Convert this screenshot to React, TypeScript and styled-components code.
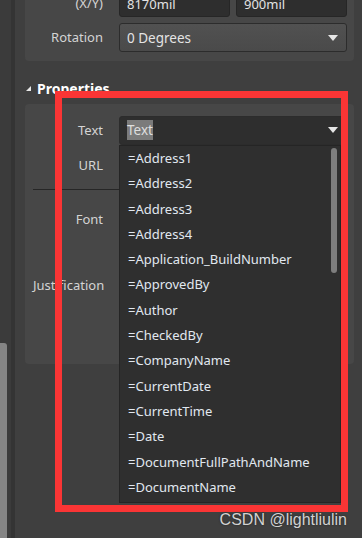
import React from "react";
import styled, { createGlobalStyle } from "styled-components";

const Global = createGlobalStyle`
  html, body {
    margin: 0;
    padding: 0;
    background: #3f3f3f;
    overflow: hidden;
  }
  body {
    font-family: "Noto Sans", "Open Sans", sans-serif;
  }
`;

const Screen = styled.div`
  position: relative;
  width: 362px;
  height: 538px;
  display: flex;
  overflow: hidden;
  background: #3f3f3f;
`;

const OuterScroll = styled.div`
  width: 11px;
  background: #3b3b3b;
  display: flex;
  flex-direction: column;
  justify-content: flex-end;
`;

const OuterThumb = styled.div`
  width: 7px;
  height: 195px;
  background: #858585;
  border-radius: 0 3px 0 0;
`;

const Divider = styled.div`
  width: 4px;
  background: #343434;
`;

const Panel = styled.div`
  flex: 1;
  padding: 0 8px 0 10px;
  display: flex;
  flex-direction: column;
`;

const Card = styled.div<{ $top?: number; $height: number }>`
  background: #474747;
  border-radius: 4px;
  margin-top: ${(p) => p.$top ?? 0}px;
  height: ${(p) => p.$height}px;
  box-sizing: border-box;
  display: flex;
  flex-direction: column;
`;

const Row = styled.div<{ $h: number; $end?: boolean }>`
  display: grid;
  grid-template-columns: 70px 228px;
  column-gap: 16px;
  padding-left: 8px;
  height: ${(p) => p.$h}px;
  align-items: ${(p) => (p.$end ? "end" : "center")};
`;

const Label = styled.div<{ $lift?: number }>`
  text-align: right;
  color: #d4d4d4;
  font-size: 13px;
  white-space: nowrap;
  margin-bottom: ${(p) => p.$lift ?? 0}px;
`;

const Input = styled.div`
  height: 26px;
  background: #2e2e2e;
  border: 1px solid #262626;
  border-radius: 3px;
  box-sizing: border-box;
  color: #e2e2e2;
  font-size: 13px;
  display: flex;
  align-items: center;
  padding-left: 7px;
`;

const Pair = styled.div`
  display: grid;
  grid-template-columns: 1fr 1fr;
  gap: 6px;
`;

const Select = styled.div<{ $dark?: boolean }>`
  height: 29px;
  box-sizing: border-box;
  border: 1px solid #2c2c2c;
  border-radius: 3px;
  background: ${(p) =>
    p.$dark ? "#2e2e2e" : "linear-gradient(#515151, #4a4a4a)"};
  color: #e4e4e4;
  font-size: 13.5px;
  display: flex;
  align-items: center;
  justify-content: space-between;
  padding: 0 8px 0 7px;
`;

const Arrow = styled.span`
  width: 0;
  height: 0;
  border-left: 5px solid transparent;
  border-right: 5px solid transparent;
  border-top: 6px solid #e6e6e6;
`;

const Selected = styled.span`
  background: #7b7b7b;
  color: #dedede;
  padding: 1px 0;
`;

const SectionHead = styled.div`
  height: 43px;
  box-sizing: border-box;
  padding: 12px 0 0 1px;
  display: flex;
  align-items: center;
  gap: 6px;
  color: #ffffff;
  font-weight: 700;
  font-size: 14px;
`;

const Tri = styled.span`
  width: 0;
  height: 0;
  border-left: 5px solid transparent;
  border-bottom: 5px solid #e8e8e8;
`;

const Rule = styled.div`
  height: 1px;
  margin: 15px 0 0 8px;
  width: 86px;
  background: #262626;
`;

const Popup = styled.div`
  position: absolute;
  left: 119px;
  top: 145px;
  width: 222px;
  height: 358px;
  background: #2f2f2f;
  border: 1px solid #252525;
  box-sizing: border-box;
  display: flex;
`;

const List = styled.div`
  flex: 1;
  display: flex;
  flex-direction: column;
`;

const Item = styled.div`
  height: 25.3px;
  line-height: 25.3px;
  padding-left: 8px;
  color: #e1e8f0;
  font-size: 13px;
  white-space: nowrap;
`;

const ListScroll = styled.div`
  width: 6px;
  padding: 2px 3px 0 0;
`;

const ListThumb = styled.div`
  height: 125px;
  background: #7e7e7e;
  border-radius: 3px;
`;

const Highlight = styled.div`
  position: absolute;
  left: 55px;
  top: 91px;
  width: 293px;
  height: 421px;
  border: 7px solid #fa3535;
  box-sizing: border-box;
  pointer-events: none;
`;

const Mark = styled.div`
  position: absolute;
  right: 15px;
  bottom: 9px;
  color: #d2d2d2;
  font-size: 16px;
  line-height: 18px;
  font-family: "Liberation Sans", Arial, sans-serif;
  text-shadow: 0 0 2px #222;
`;

const items = [
  "Address1",
  "Address2",
  "Address3",
  "Address4",
  "Application_BuildNumber",
  "ApprovedBy",
  "Author",
  "CheckedBy",
  "CompanyName",
  "CurrentDate",
  "CurrentTime",
  "Date",
  "DocumentFullPathAndName",
  "DocumentName",
];

export default function App() {
  return (
    <Screen>
      <Global />
      <OuterScroll>
        <OuterThumb />
      </OuterScroll>
      <Divider />
      <Panel>
        <Card $top={-15} $height={76}>
          <Row $h={32} $end>
            <Label $lift={5}>(X/Y)</Label>
            <Pair>
              <Input>8170mil</Input>
              <Input>900mil</Input>
            </Pair>
          </Row>
          <Row $h={35} $end>
            <Label $lift={6}>Rotation</Label>
            <Select>
              0 Degrees
              <Arrow />
            </Select>
          </Row>
        </Card>
        <SectionHead>
          <Tri />
          Properties
        </SectionHead>
        <Card $height={260}>
          <Row $h={52}>
            <Label>Text</Label>
            <Select $dark>
              <Selected>Text</Selected>
              <Arrow />
            </Select>
          </Row>
          <Row $h={18}>
            <Label>URL</Label>
          </Row>
          <Rule />
          <Row $h={58}>
            <Label>Font</Label>
          </Row>
          <Row $h={74}>
            <Label>Justification</Label>
          </Row>
        </Card>
      </Panel>
      <Popup>
        <List>
          {items.map((t) => (
            <Item key={t}>={t}</Item>
          ))}
        </List>
        <ListScroll>
          <ListThumb />
        </ListScroll>
      </Popup>
      <Highlight />
      <Mark>CSDN @lightliulin</Mark>
    </Screen>
  );
}
